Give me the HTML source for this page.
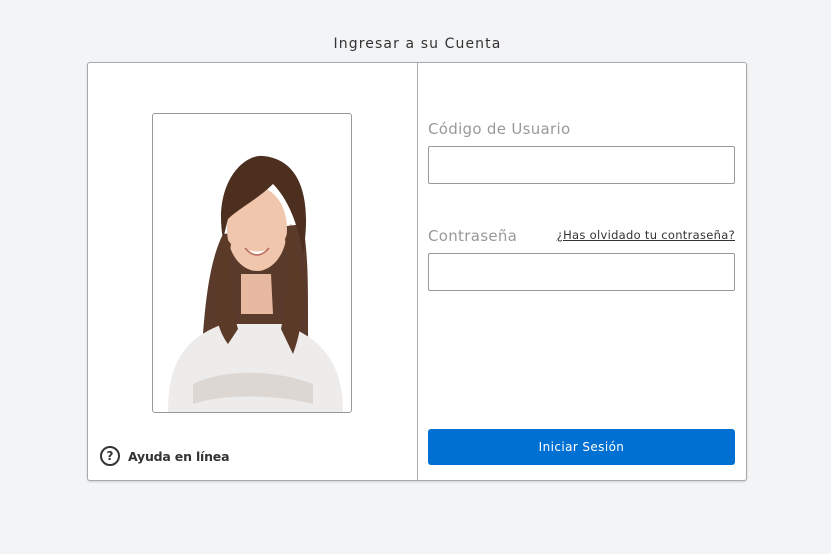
<!DOCTYPE html>
<html><head><meta charset="utf-8"><style>
html,body{margin:0;padding:0}
body{width:831px;height:554px;background:#f3f4f6;font-family:"DejaVu Sans","Liberation Sans",sans-serif;position:relative;overflow:hidden}
.title{position:absolute;top:36px;left:0;width:831px;text-align:center;font-size:14px;color:#333;letter-spacing:1.1px;padding-left:2px}
.card{position:absolute;left:87px;top:62px;width:658px;height:417px;background:#fff;border:1px solid #a9a9a9;border-radius:3px;box-shadow:0 1px 2px rgba(0,0,0,.15)}
.div{position:absolute;left:329px;top:0;width:1px;height:417px;background:#aaa}
.photo{position:absolute;left:64px;top:50px;width:198px;height:298px;border:1px solid #999;border-radius:3px;overflow:hidden;background:#fff}
.lbl{position:absolute;font-size:15px;color:#999;letter-spacing:0.3px}
.inp{position:absolute;left:340px;width:305px;height:36px;border:1px solid #999;border-radius:2px;background:#fff}
.link{position:absolute;right:11px;top:165px;font-size:11.5px;color:#333;text-decoration:underline;letter-spacing:0.3px}
.btn{position:absolute;left:340px;top:366px;width:307px;height:36px;background:#0070d2;border-radius:3px;color:#fff;font-size:12px;text-align:center;line-height:36px;letter-spacing:0.4px}
.help{position:absolute;left:12px;top:383px;font-size:12.5px;font-weight:bold;color:#333;display:flex;align-items:center;letter-spacing:-0.2px}
.q{width:16px;height:16px;border:2px solid #333;border-radius:50%;font-size:12px;text-align:center;line-height:16px;margin-right:8px;letter-spacing:0}
</style></head><body>
<div class="title">Ingresar a su Cuenta</div>
<div class="card">
<div class="div"></div>
<div class="photo">
<svg width="198" height="298" viewBox="0 0 198 298">
<path d="M70 120 C50 160 50 230 45 298 L160 298 C150 230 160 170 150 110 Z" fill="#5a3a2a"/>
<path d="M15 298 C15 250 30 225 70 210 L130 210 C170 225 190 250 190 298 Z" fill="#eeeceb"/>
<path d="M40 270 C70 255 120 255 160 270 L160 290 C120 280 70 280 40 290Z" fill="#dcd7d3"/>
<path d="M88 160 L88 200 L120 200 L118 160 Z" fill="#e6b9a0"/>
<ellipse cx="104" cy="115" rx="30" ry="42" fill="#f0c6ad"/>
<path d="M70 125 C60 70 90 40 110 42 C145 45 160 80 150 140 C145 110 135 85 120 70 C105 85 85 95 75 105 Z" fill="#4d2f20"/>
<path d="M70 120 C55 170 60 210 75 230 L85 215 C75 180 75 150 78 130Z" fill="#5b3a27"/>
<path d="M138 110 C150 160 155 200 140 240 L128 215 C135 180 135 150 132 125Z" fill="#5b3a27"/>
<path d="M92 135 Q104 145 116 135 Q104 140 92 135Z" fill="#fff"/>
<path d="M92 134 Q104 148 116 134" stroke="#b86a5a" stroke-width="1.5" fill="none"/>
</svg>
</div>
<div class="lbl" style="left:340px;top:57px">Código de Usuario</div>
<div class="inp" style="top:83px"></div>
<div class="lbl" style="left:340px;top:164px">Contraseña</div>
<div class="link">¿Has olvidado tu contraseña?</div>
<div class="inp" style="top:190px"></div>
<div class="btn">Iniciar Sesión</div>
<div class="help"><div class="q">?</div>Ayuda en línea</div>
</div>
</body></html>
